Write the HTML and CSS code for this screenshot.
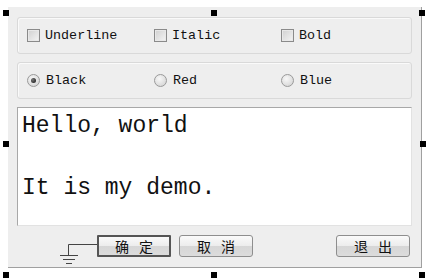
FILE: index.html
```html
<!DOCTYPE html>
<html lang="zh">
<head>
  <meta charset="UTF-8">
  <title>Demo dialog</title>
  <link rel="stylesheet" href="styles.css">
</head>
<body>

  <div class="stage">
    <div class="dialog">
      <div class="group">
        <label class="opt"><span class="check"></span>Underline</label>
        <label class="opt"><span class="check"></span>Italic</label>
        <label class="opt"><span class="check"></span>Bold</label>
      </div>

      <div class="group">
        <label class="opt"><span class="radio on"></span>Black</label>
        <label class="opt"><span class="radio"></span>Red</label>
        <label class="opt"><span class="radio"></span>Blue</label>
      </div>

      <div class="editor">Hello, world<br><br>It is my demo.</div>

      <div class="buttons">
        <svg class="ground" width="37" height="24" viewBox="0 0 37 24">
          <path d="M37 1.5 H8.5 V12.5" fill="none" stroke="#444" stroke-width="1"/>
          <path d="M0 12.5 H18 M3 16.5 H15 M6 20.5 H12" fill="none" stroke="#444" stroke-width="1"/>
        </svg>
        <button class="btn default">确 定</button>
        <button class="btn">取 消</button>
        <span class="spacer"></span>
        <button class="btn">退 出</button>
      </div>
    </div>

    <!-- selection handles -->
    <span class="handle" style="left:3px;top:3px"></span>
    <span class="handle" style="left:211px;top:3px"></span>
    <span class="handle" style="left:419px;top:3px"></span>
    <span class="handle" style="left:3px;top:134px"></span>
    <span class="handle" style="left:420px;top:134px"></span>
    <span class="handle" style="left:3px;top:265px"></span>
    <span class="handle" style="left:211px;top:265px"></span>
    <span class="handle" style="left:419px;top:265px"></span>
  </div>

</body>
</html>
```

FILE: styles.css
```css
body {
  margin: 0;
  background: white;
  font-family: "Liberation Mono", "Courier New", monospace;
}
.stage {
  position: relative;
  width: 430px;
  height: 280px;
}
.dialog {
  margin: 7px 0 0 8px;
  width: 414px;
  height: 261px;
  box-sizing: border-box;
  background: #eeeeee;
  border-right: 1px solid #a0a0a0;
  border-bottom: 1px solid #a0a0a0;
  padding: 10px 0 0 9px;
  display: flex;
  flex-direction: column;
}
.group {
  width: 395px;
  height: 37px;
  box-sizing: border-box;
  margin-bottom: 8px;
  border: 1px solid #d9d9d9;
  border-radius: 3px;
  box-shadow: inset 1px 1px 0 #fafafa;
  display: grid;
  grid-template-columns: 127px 127px 1fr;
  align-items: center;
  padding-left: 9px;
}
.opt {
  display: flex;
  align-items: center;
  font-size: 13.4px;
  color: #111;
}
.check {
  width: 11px;
  height: 11px;
  border: 1px solid #8a8a8a;
  background: linear-gradient(135deg, #d0d0d0, #f4f4f4);
  box-shadow: inset 0 0 0 1px #e8e8e8;
  margin-right: 5px;
}
.radio {
  width: 11px;
  height: 11px;
  border: 1px solid #9a9a9a;
  border-radius: 50%;
  background: radial-gradient(circle at 40% 35%, #f8f8f8, #cfcfcf);
  margin-right: 6px;
  display: flex;
  align-items: center;
  justify-content: center;
}
.radio.on::after {
  content: "";
  width: 5px;
  height: 5px;
  border-radius: 50%;
  background: radial-gradient(circle at 35% 35%, #777, #111);
}
.editor {
  width: 395px;
  height: 119px;
  box-sizing: border-box;
  background: white;
  border-top: 1px solid #a8a8a8;
  border-left: 1px solid #a8a8a8;
  border-right: 1px solid #e2e2e2;
  border-bottom: 1px solid #e2e2e2;
  padding: 3px 0 0 4px;
  font-size: 23px;
  line-height: 31px;
  color: #111;
}
.buttons {
  display: flex;
  align-items: flex-start;
  margin-top: 9px;
  width: 393px;
}
.ground {
  margin: 8px 0 0 43px;
}
.btn {
  width: 74px;
  height: 22px;
  margin-right: 8px;
  box-sizing: border-box;
  border: 1px solid #8e8e8e;
  border-radius: 3px;
  background: linear-gradient(#fafafa, #ececec 50%, #d6d6d6 51%, #dcdcdc);
  font-family: "Noto Sans CJK SC", sans-serif;
  font-size: 14px;
  line-height: 18px;
  word-spacing: 7px;
  color: #111;
  padding: 0;
}
.btn.default {
  border: 2px solid #555;
  border-radius: 1px;
}
.spacer {
  flex: 1;
}
.buttons .btn:last-child {
  margin-right: 0;
}
.handle {
  position: absolute;
  width: 6px;
  height: 6px;
  background: #000;
}
```
